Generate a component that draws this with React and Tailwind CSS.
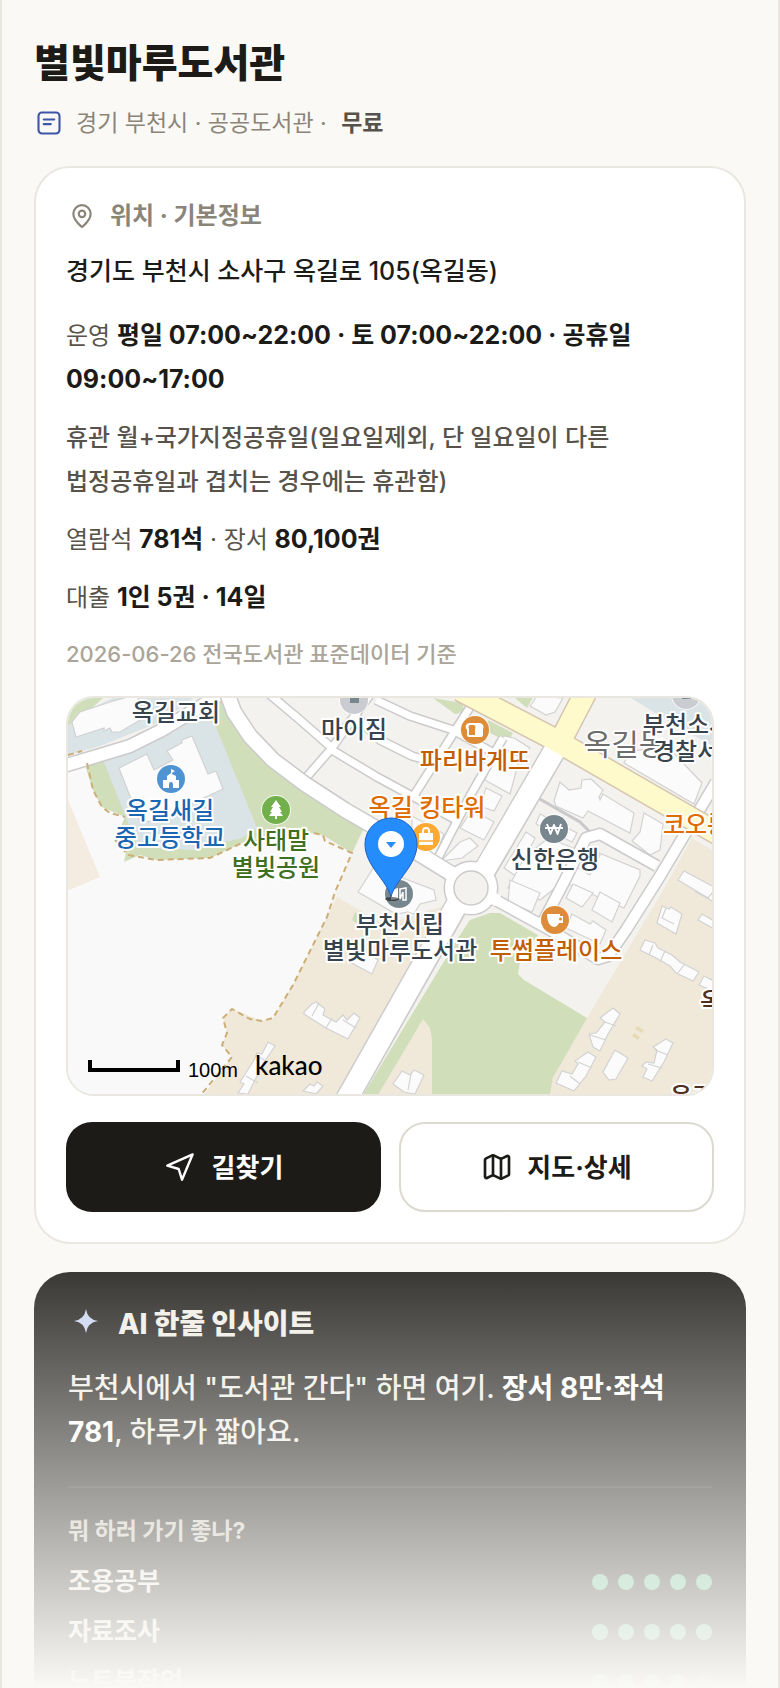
import { Map, MapPin } from 'lucide-react';

const ACTIVITIES = [
  { label: '조용공부', score: 5 },
  { label: '자료조사', score: 5 },
  { label: '노트북작업', score: 4 },
];

const BLOCKS = [
  'M72 722 L80 712 L110 702 L138 694 L140 720 L120 732 L112 732 L110 728 L104 731 L104 728 L76 737Z',
  'M119 768 L147 754 L154 770 L173 760 L167 751 L182 743 L182 740 L192 736 L208 774 L216 771 L223 789 L182 808 L166 820 L140 822Z',
  'M534 701 L530 706 L546 715 L555 712 L563 698 L536 696Z',
  'M554 801 L560 782 L569 790 L581 788 L582 780 L591 779 L603 790 L599 797 L600 800 L603 794 L634 813 L630 833 L588 811 L583 818 L556 806Z',
  'M644 813 L663 824 L660 850 L650 855 L632 841 L640 832Z',
  'M666 745 L702 783 L694 804 L624 763 L630 752Z',
  'M526 832 L535 838 L516 876 L504 868Z',
  'M540 814 L577 833 L572 842 L536 824Z',
  'M548 838 L578 850 L560 884 L540 900 L508 888 L524 858Z',
  'M582 846 L640 870 L640 876 L624 908 L568 884Z',
  'M582 846 L600 855 L590 875 L572 864Z',
  'M573 884 L593 893 L582 907 L566 898Z',
  'M600 892 L620 903 L612 922 L592 910Z',
  'M572 914 L590 924 L593 921 L606 930 L600 944 L566 928Z',
  'M510 880 L540 893 L532 912 L508 902Z',
  'M498 748 L520 757 L510 794 L485 780Z',
  'M504 736 L514 738 L530 748 L522 757 L497 745Z',
  'M486 788 L502 796 L494 811 L480 806Z',
  'M472 810 L494 822 L484 840 L460 828Z',
  'M460 842 L470 838 L478 846 L462 858 L441 861Z',
  'M374 867 L358 892 L396 914 L408 912 L414 914 L420 904 L436 900 L434 890Z',
  'M412 816 L444 834 L434 857 L412 846Z',
  'M304 1012 L312 1004 L316 1002 L325 1009 L323 1015 L336 1022 L343 1015 L347 1020 L354 1013 L360 1018 L348 1039 L326 1028 L304 1014Z',
  'M268 1042 L275 1046 L263 1064 L248 1094 L238 1093 L244 1084 L240 1082 L254 1060 L257 1053 L262 1054Z',
  'M303 1091 L310 1084 L314 1086 L317 1082 L323 1086 L316 1094Z',
  'M350 962 L362 950 L378 960 L372 974Z',
  'M393 1084 L402 1071 L410 1075 L414 1070 L424 1075 L415 1094 L404 1092Z',
  'M662 906 L669 909 L671 907 L682 914 L676 934 L657 923Z',
  'M645 940 L655 943 L658 948 L672 955 L680 962 L699 972 L693 981 L676 973 L670 966 L656 958 L640 950Z',
  'M704 976 L716 982 L716 992 L699 985Z',
  'M698 920 L702 914 L716 922 L716 930Z',
  'M696 892 L716 903 L716 888Z',
  'M613 1008 L620 1014 L608 1034 L600 1051 L593 1047 L589 1034 L596 1033 L605 1022 L600 1018Z',
  'M588 1052 L596 1057 L586 1076 L574 1091 L556 1083 L562 1071 L572 1074 L578 1064 L575 1061Z',
  'M615 1050 L628 1058 L616 1079 L609 1080 L603 1072Z',
  'M666 1039 L673 1043 L664 1062 L652 1081 L643 1077 L647 1069 L642 1066 L646 1062 L654 1063 L657 1050 L653 1047Z',
  'M678 880 L684 871 L716 888 L708 898Z',
];

const CREASES = [
  'M312 1016 L319 1003 M326 1028 L332 1018 M343 1020 L356 1028',
  'M255 1055 L268 1062 M246 1076 L258 1083 M411 1074 L408 1090',
  'M653 945 L649 955 M665 951 L660 962 M684 965 L677 974',
  'M590 1035 L606 1040 M605 1022 L616 1026 M570 1076 L580 1084 M578 1062 L592 1068',
  'M648 1064 L662 1068 M655 1050 L668 1055 M666 908 L662 918 L674 924',
];

const MINOR_ROADS = [
  'M262 688 L300 720 L332 748 L304 780',
  'M332 748 L350 722 L372 692',
  'M332 750 L377 777 L425 803 L460 822',
  'M376 700 L410 716 L453 730 L492 752',
  'M356 716 L380 740 L412 756 L440 764',
  'M472 704 L453 734 L413 797',
  'M503 738 L470 796 L438 858',
];

const LOCAL_ROADS = [
  'M490 897 L545 927 L598 959 L608 956 L626 930 L660 876 L716 782',
  'M543 922 L565 880 L586 838 L600 834 L657 866',
];

const LABELS = [
  { x: 176, y: 721, text: '옥길교회', color: '#37444e' },
  { x: 354, y: 738, text: '마이짐', color: '#37444e' },
  { x: 475, y: 769, text: '파리바게뜨', color: '#c25e00' },
  { x: 427, y: 816, text: '옥길 킹타워', color: '#e06c00' },
  { x: 170, y: 819, text: '옥길새길', color: '#1a66b3' },
  { x: 170, y: 846, text: '중고등학교', color: '#1a66b3' },
  { x: 276, y: 849, text: '사태말', color: '#3f6f20' },
  { x: 276, y: 876, text: '별빛공원', color: '#3f6f20' },
  { x: 555, y: 868, text: '신한은행', color: '#37444e' },
  { x: 400, y: 933, text: '부천시립', color: '#37444e' },
  { x: 400, y: 959, text: '별빛마루도서관', color: '#37444e' },
  { x: 556, y: 959, text: '투썸플레이스', color: '#c25e00' },
  { x: 687, y: 733, text: '부천소사', color: '#37444e' },
  { x: 686, y: 760, text: '경찰서', color: '#37444e' },
  { x: 696, y: 833, text: '코오롱', color: '#e06c00' },
  { x: 711, y: 1010, text: '옥', color: '#4f3022' },
  { x: 692, y: 1105, text: '옥길', color: '#4f3022' },
];

const Poi = ({ x, y, color, children }) => (
  <g transform={`translate(${x} ${y})`}>
    <circle r="15" fill="#fff" opacity="0.8" />
    <circle r="14" fill={color} />
    {children}
  </g>
);

const Road = ({ paths, width }) => (
  <g fill="none" strokeLinejoin="round">
    {paths.map((d) => <path key={d} d={d} stroke="#cccbcc" strokeWidth={width + 3} />)}
    {paths.map((d) => <path key={d} d={d} stroke="#fff" strokeWidth={width} />)}
  </g>
);

const LocationMap = () => (
  <svg
    viewBox="68 698 644 396"
    preserveAspectRatio="xMidYMid slice"
    className="block h-full w-full"
    role="img"
    aria-label="별빛마루도서관 주변 지도"
  >
    <rect x="0" y="600" width="900" height="600" fill="#f3f2ee" />

    {/* land use */}
    <path d="M60 760 L85 765 L93 790 L102 807 L125 817 L115 840 L128 855 L157 860 L210 858 L242 843 L313 833 L352 853 L335 892 L327 917 L307 957 L293 985 L273 1018 L262 1021 L232 1009 L223 1018 L227 1033 L222 1045 L232 1057 L200 1100 L60 1100Z" fill="#f9f9f9" />
    <path d="M60 780 L100 877 L60 894Z" fill="#f4ece1" />
    <path d="M68 690 L112 690 L92 708 L68 726Z" fill="#d0deba" />
    <path d="M68 726 L92 708 L130 690 L205 690 L160 722 L100 746 L68 755Z" fill="#dae3e6" />
    <path d="M85 765 L215 698 L223 690 L237 728 L267 765 L307 793 L363 830 L352 853 L323 835 L313 833 L242 843 L210 858 L157 860 L140 855 L124 862 L126 852 L115 840 L125 817 L102 807 L93 790Z" fill="#d0deba" />
    <path d="M103 760 L160 737 L210 712 L257 828 L242 838 L193 850 L138 847Z" fill="#dae3e6" />
    <path d="M337 897 L385 925 L446 905 L340 1100 L200 1100 L232 1057 L222 1045 L227 1033 L223 1018 L232 1009 L262 1021 L273 1018 L293 985 L307 957 L327 917Z" fill="#f0e9da" />
    <path d="M662 892 L692 838 L720 855 L720 1100 L548 1100 L553 1077 L587 1018Z" fill="#f0e9da" />
    <path d="M355 912 L362 918 L358 924 L352 920Z M433 698 L462 703 L465 712 L455 714Z M488 720 L513 733 L508 742 L486 731Z M505 690 L537 690 L527 708Z" fill="#d0deba" />
    <path d="M618 690 L720 690 L720 750 L670 722Z" fill="#dae3e6" />
    <path d="M490 913 L500 913 L538 935 L520 962 L518 974 L524 980 L587 1018 L562 1062 L553 1077 L549 1100 L360 1100 L460 935 L470 920Z" fill="#d0deba" />
    <path d="M423 1019 L430 1028 L432 1040 L432 1100 L375 1100Z" fill="#f0e9da" />
    <path d="M637 1026 L644 1030 L642 1033 L635 1029Z M634 1033 L640 1037 L638 1040 L632 1036Z" fill="#e5dbb4" />

    <g fill="#fbfbfb" stroke="#d2d2d2" strokeWidth="1.2">
      {BLOCKS.map((d) => <path key={d} d={d} />)}
      {CREASES.map((d) => <path key={d} d={d} fill="none" />)}
    </g>

    {/* roads */}
    <Road width={7} paths={MINOR_ROADS} />
    <path d="M538 798 L580 822 L592 834" fill="none" stroke="#c9c8ca" strokeWidth="3" />
    <Road width={10} paths={LOCAL_ROADS} />
    <Road width={12} paths={['M60 767 L97 756 L130 746 L160 731 L195 710 L220 694']} />
    <path d="M460 690 L548 736 L720 835 M562 738 L588 688" fill="none" stroke="#d8c5b0" strokeWidth="24" />
    <g fill="none" stroke="#cccbcc">
      <path d="M226 690 L234 712 L250 736 L273 760 L305 784 L345 810 L400 842 L450 873" strokeWidth="17" />
      <path d="M485 870 L556 748" strokeWidth="24" />
      <path d="M462 896 L335 1120" strokeWidth="24" />
      <circle cx="471" cy="888" r="21" strokeWidth="13" />
    </g>
    <g fill="none" stroke="#fff">
      <path d="M226 690 L234 712 L250 736 L273 760 L305 784 L345 810 L400 842 L452 874" strokeWidth="14" />
      <path d="M480 878 L556 748" strokeWidth="21" />
      <path d="M464 892 L335 1120" strokeWidth="21" />
      <path d="M486 894 L498 901" strokeWidth="12" />
      <circle cx="471" cy="888" r="21" strokeWidth="10" />
    </g>
    <circle cx="471" cy="888" r="17" fill="#f3f2ee" stroke="#cccbcc" strokeWidth="1.5" />
    <path d="M460 690 L548 736 L720 835 M562 738 L588 688" fill="none" stroke="#fffacb" strokeWidth="21" />

    {/* trails */}
    <g fill="none" stroke="#cdae76" strokeWidth="2" strokeDasharray="6 4">
      <path d="M68 755 L82 751 M87 763 L93 790 L102 807 L110 813 L125 817" />
      <path d="M115 840 L128 855 L157 860 L210 858 L242 843 L313 833 L323 835 L325 841 L352 853 L335 892 L327 917 L307 957 L293 985 L273 1018 L262 1021 L250 1019 L232 1009 L223 1018 L227 1033 L222 1045 L232 1057 L200 1096" />
    </g>

    {/* points of interest */}
    <Poi x={171} y={779} color="#4f93d2">
      <path d="M-8 9V1H-4V-3L0 -6V-10L4 -8L1 -6V-5L5 -3V1H8V9H2V5A2 2 0 0 0 -2 5V9Z" fill="#fff" />
    </Poi>
    <Poi x={276} y={810} color="#72b04c">
      <path d="M0 -10L5 -3H3L6 2H4L7 6H1V9H-1V6H-7L-4 2H-6L-3 -3H-5Z" fill="#fff" />
    </Poi>
    <Poi x={475} y={730} color="#dd8d39">
      <path d="M-6 -7H5A4 4 0 0 1 8 -1V5Q8 7 6 7H-6Q-8 7 -8 5V0A4 4 0 0 1 -6 -7Z" fill="#fff" />
      <path d="M-6 5V-1A3 3 0 0 1 -5 -5H-1A3 3 0 0 1 0 -1V5Z" fill="#dd8d39" />
    </Poi>
    <Poi x={426} y={837} color="#ffa935">
      <path d="M-7 -4H7V8H-7Z" fill="#fff" />
      <path d="M-3 -4V-6A3 3 0 0 1 3 -6V-4" fill="none" stroke="#fff" strokeWidth="2" />
      <path d="M-7 4H7" stroke="#ffa935" strokeWidth="1.5" />
    </Poi>
    <Poi x={554} y={829} color="#78868e">
      <path d="M-7 -5L-3.500 5L0 -4L3.500 5L7 -5M-9 -1H9" fill="none" stroke="#fff" strokeWidth="2" strokeLinejoin="round" />
    </Poi>
    <Poi x={555} y={920} color="#dd8d39">
      <path d="M-8 -6H5V-4H8V3H4Q2 7 -1 7Q-8 6 -8 -6Z" fill="#fff" />
      <circle cx="5.500" cy="-1" r="1.500" fill="#dd8d39" />
    </Poi>
    <Poi x={354} y={700} color="#cbccd1"><rect x="-4" y="-4" width="9" height="7" fill="#78868e" /></Poi>
    <Poi x={686} y={695} color="#cbccd1"><rect x="-4" y="-2" width="9" height="6" fill="#78868e" /></Poi>
    <Poi x={399} y={894} color="#78868e">
      <path d="M-8 -4L-1 -6V5L-8 6Z" fill="#fff" />
      <path d="M1 -5L7 -6V6H4V-2L1 5Z" fill="none" stroke="#fff" strokeWidth="1.5" />
    </Poi>

    <text x="625" y="755" textAnchor="middle" fontSize="30" fill="#6d6d6d" stroke="#fff" strokeWidth="3" paintOrder="stroke">옥길동</text>
    <g fontSize="24" fontWeight="500" textAnchor="middle" stroke="#fff" strokeWidth="4" strokeLinejoin="round" paintOrder="stroke">
      {LABELS.map(({ x, y, text, color }) => (
        <text key={text} x={x} y={y} fill={color}>{text}</text>
      ))}
    </g>

    {/* library marker */}
    <ellipse cx="392" cy="899" rx="7" ry="2" fill="#000" opacity="0.5" />
    <path d="M391 897C387 880 365 866 365 844A26 26 0 1 1 417 844C417 866 395 880 391 897Z" fill="#258dfb" stroke="#1c5fc4" strokeWidth="1" />
    <circle cx="391" cy="844" r="13" fill="#fff" />
    <path d="M386 842H396L391 848Z" fill="#258dfb" />

    <path d="M90 1060V1070H178V1060" fill="none" stroke="#000" strokeWidth="4" />
    <text x="188" y="1077" fontSize="20" fontFamily="Liberation Sans, sans-serif">100m</text>
    <text x="255" y="1075" fontSize="26" fontWeight="500" fontFamily="Lato, sans-serif">kakao</text>
  </svg>
);

const Strong = ({ children }) => <strong className="text-[25px] leading-none font-bold text-[#1c1b17]">{children}</strong>;

const ScoreDots = ({ score }) => (
  <span className="flex gap-[10px]" role="img" aria-label={`5점 중 ${score}점`}>
    {[1, 2, 3, 4, 5].map((n) => (
      <span key={n} className={`size-4 rounded-full ${n <= score ? 'bg-[#5bb98c]' : 'bg-[#4a4843]'}`} />
    ))}
  </span>
);

export default function App() {
  return (
    <div className="relative h-screen overflow-hidden border-x-2 border-[#e9e7e0] bg-[#faf9f6] px-8 pt-9 font-['Inter','Noto_Sans_CJK_KR',sans-serif] text-[#1c1b17]">
      <header>
        <h1 className="text-[39px] leading-[54px] font-extrabold">별빛마루도서관</h1>
        <p className="mt-3 flex items-center gap-[13px] text-[23px] leading-[42px] text-[#8a8578]">
          <svg viewBox="0 0 24 24" className="ml-px size-7" fill="none" stroke="#3d56a8" strokeWidth="1.8" strokeLinecap="round" strokeLinejoin="round">
            <rect x="3" y="3" width="18" height="18" rx="3" />
            <path d="M7.500 9h9M7.500 13h6" />
          </svg>
          <span>경기 부천시 · 공공도서관 · <b className="ml-2 font-semibold text-[#57534a]">무료</b></span>
        </p>
      </header>

      <main>
        <section className="mt-[22px] rounded-[36px] border-2 border-[#e9e7e0] bg-white p-[30px]">
          <h2 className="flex items-center gap-3 text-2xl leading-9 font-bold text-[#8a8578]">
            <span className="flex w-8 justify-center"><MapPin className="size-[26px]" strokeWidth={2} /></span>
            위치 · 기본정보
          </h2>
          <p className="mt-[17px] text-[25px] leading-10 font-medium">경기도 부천시 소사구 옥길로 105(옥길동)</p>

          <div className="mt-[23px] space-y-[14px] text-2xl leading-[44px] break-keep text-[#57534a]">
            <p>운영 <Strong>평일 07:00~22:00 · 토 07:00~22:00 · 공휴일 09:00~17:00</Strong></p>
            <p className="font-medium">휴관 월+국가지정공휴일(일요일제외, 단 일요일이 다른 법정공휴일과 겹치는 경우에는 휴관함)</p>
            <p>열람석 <Strong>781석</Strong> · 장서 <Strong>80,100권</Strong></p>
            <p>대출 <Strong>1인 5권 · 14일</Strong></p>
          </div>
          <p className="mt-4 text-[22px] leading-9 font-medium text-[#aaa598]">2026-06-26 전국도서관 표준데이터 기준</p>

          <div className="mt-6 h-[400px] overflow-hidden rounded-[28px] border-2 border-[#e9e7e0]">
            <LocationMap />
          </div>

          <div className="mt-[26px] grid grid-cols-2 gap-[18px] text-[26px] font-bold">
            <button type="button" className="flex h-[90px] items-center justify-center gap-4 rounded-[26px] bg-[#1c1b17] text-white">
              <svg viewBox="0 0 24 24" className="size-8" fill="none" stroke="currentColor" strokeWidth="1.8" strokeLinejoin="round">
                <path d="M21.500 2.500L2.500 11l8.500 2.500L13.500 21.500z" />
              </svg>
              길찾기
            </button>
            <button type="button" className="flex h-[90px] items-center justify-center gap-[14px] rounded-[26px] border-2 border-[#dcdad0] bg-white">
              <Map className="size-8" strokeWidth={2} />
              지도·상세
            </button>
          </div>
        </section>

        <section className="mt-7 rounded-[36px] bg-[#1c1b17] p-[34px] text-[#f0eee6]">
          <h2 className="flex items-center gap-[14px] text-[28px] leading-9 font-extrabold">
            <svg viewBox="0 0 36 36" className="size-9" fill="#c9d4f2">
              <path d="M18 3Q19.500 13.500 30 15Q19.500 16.500 18 27Q16.500 16.500 6 15Q16.500 13.500 18 3Z" />
            </svg>
            AI 한줄 인사이트
          </h2>
          <p className="mt-6 text-[28px] leading-[44px] font-medium break-keep">
            부천시에서 "도서관 간다" 하면 여기. <strong className="font-bold text-white">장서 8만·좌석 781</strong>, 하루가 짧아요.
          </p>
          <div className="mt-8 border-t-2 border-white/8 pt-[23px]">
            <h3 className="text-[23px] leading-10 font-bold text-[#c9c5b8]">뭐 하러 가기 좋나?</h3>
            <ul className="mt-[6px] text-[25px] font-semibold">
              {ACTIVITIES.map(({ label, score }) => (
                <li key={label} className="flex h-[50px] items-center justify-between">
                  {label}
                  <ScoreDots score={score} />
                </li>
              ))}
            </ul>
          </div>
        </section>
      </main>

      <div className="pointer-events-none absolute inset-x-0 bottom-0 h-[480px] bg-linear-to-b from-[#faf9f6]/0 to-[#faf9f6]" />
    </div>
  );
}
